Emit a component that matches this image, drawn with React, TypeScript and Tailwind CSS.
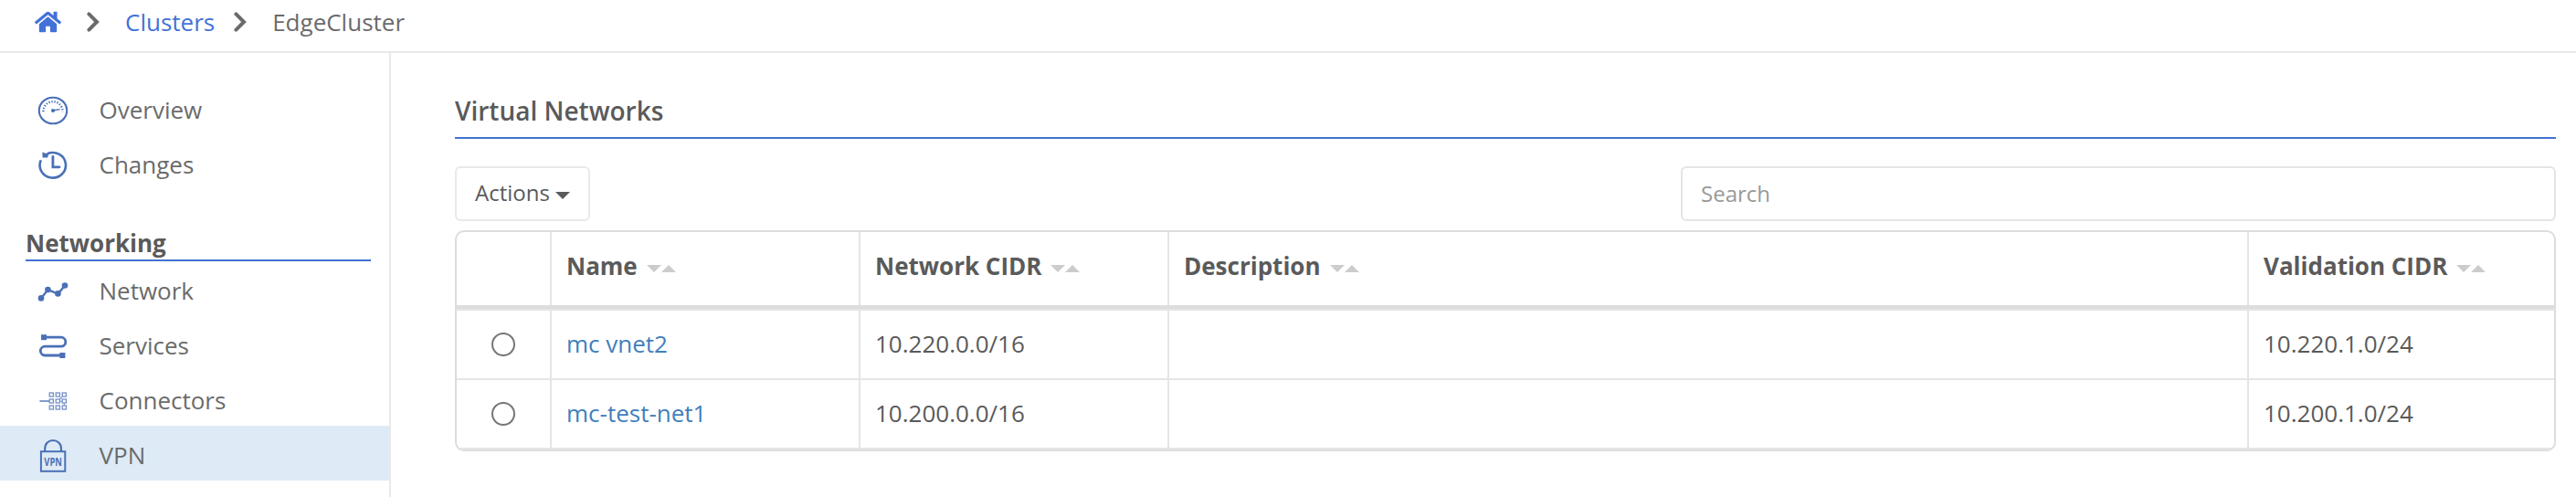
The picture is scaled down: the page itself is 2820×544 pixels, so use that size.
import React from "react";
import { FaHome } from "react-icons/fa";

const Chevron = () => (
  <svg width="14" height="22" viewBox="0 0 14 22" fill="none" stroke="#6b6b6b" strokeWidth="4" strokeLinecap="round" strokeLinejoin="miter">
    <path d="M2.4 2.4 L11 11 L2.4 19.6" />
  </svg>
);

const BLUE = "#4a70b6";

const GaugeIcon = () => (
  <svg width="34" height="32" viewBox="0 0 34 32" fill="none" stroke={BLUE}>
    <ellipse cx="17" cy="16" rx="15.2" ry="14.3" strokeWidth="2.1" />
    <path d="M6.4 17.2 A10.6 11 0 0 1 27.6 17.2" strokeWidth="2.4" strokeDasharray="1.3 1.75" />
    <path d="M17 16 L24.6 14.6" strokeWidth="1.4" />
    <circle cx="17" cy="16.1" r="2.1" fill={BLUE} stroke="none" />
  </svg>
);

const HistoryIcon = () => (
  <svg width="34" height="32" viewBox="0 0 34 32" fill="none" stroke={BLUE}>
    <path d="M3.8 10.2 A14.2 13.8 0 1 0 10.8 3.3" strokeWidth="2.6" />
    <path d="M5.4 1.6 L8 2.4 L12.2 3.2 L11.2 7.4 L5.6 7.6 Z" fill={BLUE} stroke="none" />
    <path d="M16.9 6.4 V17.8 H24" strokeWidth="2.8" strokeLinecap="round" />
  </svg>
);

const NetworkIcon = () => (
  <svg width="34" height="32" viewBox="0 0 34 32" fill="none" stroke={BLUE}>
    <path d="M4 23.4 L11.4 14.1 L22.6 18.6 L30 9.4" strokeWidth="2.4" />
    <g fill={BLUE} stroke="none">
      <circle cx="4" cy="23.4" r="3.3" />
      <circle cx="11.4" cy="14.1" r="3.3" />
      <circle cx="22.4" cy="18.4" r="3.3" />
      <circle cx="30" cy="9.5" r="3.3" />
    </g>
  </svg>
);

const ServicesIcon = () => (
  <svg width="34" height="32" viewBox="0 0 34 32" fill="none" stroke={BLUE}>
    <path d="M7 6.2 H25.8 A4.9 4.9 0 0 1 25.8 16.2 H8.2 A4.9 4.9 0 0 0 8.2 26 H26" strokeWidth="2.8" />
    <rect x="4" y="3.2" width="6" height="6" fill={BLUE} stroke="none" />
    <rect x="24.4" y="23" width="6" height="6" fill={BLUE} stroke="none" />
  </svg>
);

const GRID = [13.2, 20.2, 27.2];

const ConnectorsIcon = () => (
  <svg width="34" height="32" viewBox="0 0 34 32" fill="none" stroke="#7490c8">
    <path d="M2.4 16 H13" strokeWidth="1.4" stroke={BLUE} />
    {GRID.map((x) =>
      GRID.map((y) => <rect key={`${x}-${y}`} x={x} y={y - 6.2} width="4.2" height="4" strokeWidth="1.3" />)
    )}
    <path d="M24.4 16.2 H27 M24.4 14 L27.2 11.2 M29.3 18.4 V20.8" strokeWidth="1.1" />
  </svg>
);

const VpnIcon = () => (
  <svg width="34" height="38" viewBox="0 0 34 38" fill="none" stroke={BLUE}>
    <path d="M8.2 14 V11.2 C8.2 5.4 12 2 17 2 S26 5.4 26 11.2 V14" strokeWidth="2.2" />
    <rect x="3.9" y="14.2" width="26.4" height="21.6" strokeWidth="2" />
    <text x="17.1" y="29.6" textAnchor="middle" textLength="19.6" lengthAdjust="spacingAndGlyphs" fill={BLUE} stroke="none" className="font-['Open_Sans'] text-[12px] font-bold">
      VPN
    </text>
  </svg>
);

type NavProps = { icon: React.ReactNode; label: string; active?: boolean };

const NavItem = ({ icon, label, active }: NavProps) => (
  <a className={`flex h-[60px] items-center pl-[41px] text-[#6b6b6b] ${active ? "bg-[#deebf6]" : ""}`}>
    <span className="flex w-[67.5px] pt-[6.6px]">{icon}</span>
    <span className="pt-[3px]">{label}</span>
  </a>
);

const SortCarets = () => (
  <svg width="32" height="8" viewBox="0 0 32 8" fill="#cccccc" className="mt-[7px] ml-[10px]">
    <path d="M0 0 H16 L8 8 Z M16 8 H32 L24 0 Z" />
  </svg>
);

const COLS = "grid grid-cols-[104px_338px_338px_1fr_334px]";
const CELL = "flex items-center border-[#e5e5e5] pl-4";

const HEADERS = ["Name", "Network CIDR", "Description", "Validation CIDR"];
const ROWS = [
  ["mc vnet2", "10.220.0.0/16", "", "10.220.1.0/24"],
  ["mc-test-net1", "10.200.0.0/16", "", "10.200.1.0/24"],
];

export default function App() {
  return (
    <div className="flex h-[544px] w-full flex-col overflow-hidden bg-white font-['Open_Sans',sans-serif] text-[26px] leading-[36px] text-[#5a5a5a]">
      <nav className="flex h-[58px] shrink-0 items-center border-b-2 border-[#e9e9e9] pb-[8px] pl-[38px]">
        <FaHome className="h-[26px] w-[29px] text-[#4272d7]" />
        <span className="ml-[28px]"><Chevron /></span>
        <a className="ml-[28px] text-[#4272d7]">Clusters</a>
        <span className="ml-[21px]"><Chevron /></span>
        <span className="ml-[28px] text-[#6b6b6b]">EdgeCluster</span>
      </nav>
      <div className="flex grow">
        <aside className="w-[428px] shrink-0 border-r-2 border-[#e9e9e9] pt-[30px]">
          <NavItem icon={<GaugeIcon />} label="Overview" />
          <NavItem icon={<HistoryIcon />} label="Changes" />
          <h2 className="mr-5 ml-7 flex h-[78px] items-end border-b-2 border-[#4272d0] font-bold">Networking</h2>
          <NavItem icon={<NetworkIcon />} label="Network" />
          <NavItem icon={<ServicesIcon />} label="Services" />
          <NavItem icon={<ConnectorsIcon />} label="Connectors" />
          <NavItem icon={<VpnIcon />} label="VPN" active />
        </aside>
        <main className="grow pt-[44px] pr-[22px] pl-[70px]">
          <h1 className="h-[50px] border-b-2 border-[#4272d0] text-[28px] leading-[38px] font-semibold">Virtual Networks</h1>
          <div className="mt-[30px] flex justify-between text-[24px]">
            <button className="flex h-[60px] w-[148px] items-center rounded-[6px] border-2 border-[#e9e9e9] pb-[2px] pl-[20px]">
              Actions
              <svg width="16" height="8" viewBox="0 0 16 8" fill="#5a5a5a" className="mt-[6px] ml-[6px]">
                <path d="M0 0 H16 L8 8 Z" />
              </svg>
            </button>
            <input placeholder="Search" className="h-[60px] w-[958px] rounded-[6px] border-2 border-[#e5e5e5] px-[20px] pb-[2px] placeholder:text-[#999999]" />
          </div>
          <div className="mt-[10px] overflow-hidden rounded-[10px] border-2 border-[#dddddd]">
            <div className={`${COLS} h-[84px] border-b-4 border-[#dddddd] font-bold`}>
              <div className={`${CELL} border-r-2`} />
              {HEADERS.map((h, i) => (
                <div key={h} className={`${CELL} pb-[7px] ${i < 3 ? "border-r-2" : ""}`}>
                  {h}
                  <SortCarets />
                </div>
              ))}
            </div>
            {ROWS.map((row, r) => (
              <div key={row[0]} className={`${COLS} border-[#e5e5e5] ${r === 0 ? "h-[78px] border-y-2" : "h-[76px] border-b-2"}`}>
                <div className="flex items-center justify-center border-r-2 border-[#e5e5e5]">
                  <span className="size-[26px] rounded-full border-2 border-[#767676]" />
                </div>
                {row.map((c, i) => (
                  <div key={i} className={`${CELL} pb-[2px] ${i < 3 ? "border-r-2" : ""} ${i === 0 ? "text-[#427fbb]" : ""}`}>
                    {c}
                  </div>
                ))}
              </div>
            ))}
          </div>
        </main>
      </div>
    </div>
  );
}
